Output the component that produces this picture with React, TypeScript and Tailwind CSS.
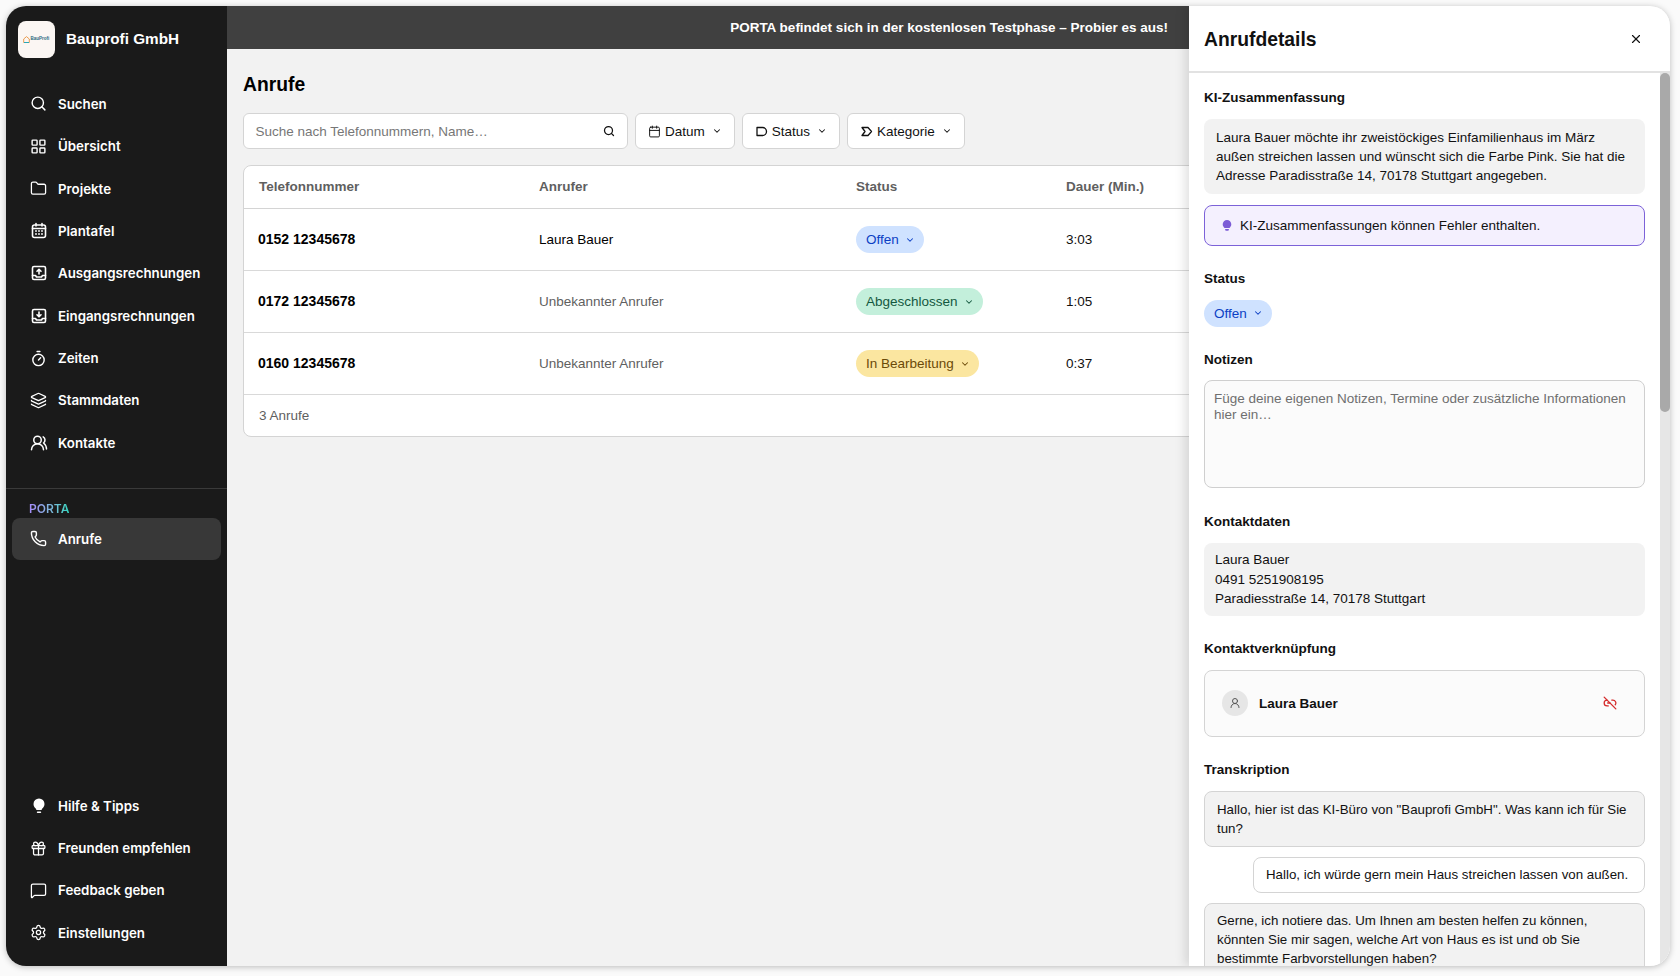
import {
  Calendar,
  ChevronDown,
  Folder,
  Gift,
  LayoutGrid,
  Layers,
  Link2Off,
  MessageSquare,
  Phone,
  Search,
  Settings,
  Timer,
  UserRound,
  UsersRound,
  X,
} from 'lucide-react';
import type { ReactNode } from 'react';

function InvoiceIcon({ down }: { down?: boolean }) {
  return (
    <svg width="18" height="18" viewBox="0 0 18 18" fill="none" stroke="currentColor" strokeWidth="1.6" strokeLinecap="round" strokeLinejoin="round">
      <rect x="2.5" y="2.5" width="13" height="13" rx="1.5" />
      <path d="M2.5 11.5h3l1 1.5h5l1-1.5h3" />
      {down ? <path d="M9 5v4.5M7 7.8l2 2 2-2" /> : <path d="M9 10V5.5M7 7.3l2-2 2 2" />}
    </svg>
  );
}

function PlanIcon() {
  return (
    <svg width="18" height="18" viewBox="0 0 18 18" fill="none" stroke="currentColor" strokeWidth="1.6" strokeLinecap="round">
      <rect x="2.5" y="3" width="13" height="12.5" rx="2" />
      <path d="M2.5 6.5h13M6 1.5v2.5M12 1.5v2.5" />
      <path d="M6 9h.01M9 9h.01M12 9h.01M6 12h.01M9 12h.01M12 12h.01" strokeWidth="1.8" />
    </svg>
  );
}

function BulbIcon() {
  return (
    <svg width="18" height="18" viewBox="0 0 18 18" fill="currentColor">
      <path d="M9 1.5a5.500 5.500 0 0 0-5.500 5.500c0 2.200 1.200 3.300 2.200 4.600.4.500.6 1 .7 1.400h5.200c.1-.4.300-.9.700-1.400 1-1.300 2.200-2.400 2.200-4.600A5.500 5.500 0 0 0 9 1.500z" />
      <rect x="6.800" y="14.500" width="4.400" height="1.500" rx=".7" />
    </svg>
  );
}

const mainNav: { label: string; icon: ReactNode }[] = [
  { label: 'Suchen', icon: <Search size={17} strokeWidth={2} /> },
  { label: 'Übersicht', icon: <LayoutGrid size={17} strokeWidth={2} /> },
  { label: 'Projekte', icon: <Folder size={17} strokeWidth={1.8} /> },
  { label: 'Plantafel', icon: <PlanIcon /> },
  { label: 'Ausgangsrechnungen', icon: <InvoiceIcon /> },
  { label: 'Eingangsrechnungen', icon: <InvoiceIcon down /> },
  { label: 'Zeiten', icon: <Timer size={17} strokeWidth={2} /> },
  { label: 'Stammdaten', icon: <Layers size={17} strokeWidth={1.8} /> },
  { label: 'Kontakte', icon: <UsersRound size={18} strokeWidth={2} /> },
];

const bottomNav: { label: string; icon: ReactNode }[] = [
  { label: 'Hilfe & Tipps', icon: <BulbIcon /> },
  { label: 'Freunden empfehlen', icon: <Gift size={17} strokeWidth={1.8} /> },
  { label: 'Feedback geben', icon: <MessageSquare size={17} strokeWidth={1.8} /> },
  { label: 'Einstellungen', icon: <Settings size={17} strokeWidth={1.8} /> },
];

function NavItem({ label, icon, active }: { label: string; icon: ReactNode; active?: boolean }) {
  return (
    <div className={`flex h-[42.4px] items-center rounded-lg pl-[18px] text-[13.3px] font-semibold text-white ${active ? 'bg-[#383838]' : ''}`}>
      <span className="flex w-[27px] shrink-0 items-center justify-start">{icon}</span>
      <span className="ml-[1px] pt-[2px]">{label}</span>
    </div>
  );
}

function Sidebar() {
  return (
    <aside className="flex w-[221px] shrink-0 flex-col bg-[#1a1a1a] font-['Inter',sans-serif]">
      <div className="flex h-[66px] items-center gap-[11.5px] pl-[11.5px] pt-[1px]">
        <div className="flex h-[37px] w-[37px] items-center justify-center gap-[1px] rounded-lg bg-[#fbf6f3]">
          <svg width="7" height="7" viewBox="0 0 7 7" fill="none">
            <path d="M.7 6.500V3L3.500.6 6.300 3v3.500z" stroke="#e8913c" strokeWidth=".9" />
            <path d="M1 6.500h5" stroke="#2aa7b5" strokeWidth="1" />
          </svg>
          <span className="font-['Liberation_Sans',sans-serif] text-[4.500px] font-bold leading-none text-[#2b6a80]">BauProfi</span>
        </div>
        <span className="font-['Liberation_Sans',sans-serif] text-[15.3px] font-bold text-white">Bauprofi GmbH</span>
      </div>
      <nav className="mt-[10.5px] flex flex-col px-[6px]">
        {mainNav.map((item) => (
          <NavItem key={item.label} label={item.label} icon={item.icon} />
        ))}
      </nav>
      <div className="mt-[23.5px] border-t border-[#3a3a3a] px-[6px] pt-[13px]">
        <div className="pl-[17px] text-[12px] font-semibold leading-[13px]">
          <span className="inline-block bg-gradient-to-r from-[#a78bfa] to-[#2dd4bf] bg-clip-text text-transparent">PORTA</span>
        </div>
        <div className="mt-[3px]">
          <NavItem label="Anrufe" icon={<Phone size={17} strokeWidth={2} />} active />
        </div>
      </div>
      <nav className="mt-auto flex flex-col px-[6px] pb-[12px]">
        {bottomNav.map((item) => (
          <NavItem key={item.label} label={item.label} icon={item.icon} />
        ))}
      </nav>
    </aside>
  );
}

function FilterButton({ label, icon }: { label: string; icon: ReactNode }) {
  return (
    <button className="flex h-[36px] items-center gap-[4px] rounded-md border border-[#d4d4d4] bg-white px-[12px] text-[13.5px] text-[#111]">
      {icon}
      <span className="pt-[2px]">{label}</span>
      <ChevronDown size={10} strokeWidth={2.5} className="ml-[3px]" />
    </button>
  );
}

const calls = [
  { phone: '0152 12345678', caller: 'Laura Bauer', known: true, status: 'Offen', pill: 'bg-[#cfe2ff] text-[#0b3fc4]', time: '3:03' },
  { phone: '0172 12345678', caller: 'Unbekannter Anrufer', known: false, status: 'Abgeschlossen', pill: 'bg-[#c3efdb] text-[#14583f]', time: '1:05' },
  { phone: '0160 12345678', caller: 'Unbekannter Anrufer', known: false, status: 'In Bearbeitung', pill: 'bg-[#fbe6a0] text-[#6b4a08]', time: '0:37' },
];

function StatusPill({ label, className }: { label: string; className: string }) {
  return (
    <span className={`inline-flex h-[27px] items-center gap-[6px] rounded-full pl-[10px] pr-[9px] text-[13.5px] ${className}`}>
      <span className="pt-[2px]">{label}</span>
      <ChevronDown size={10} strokeWidth={2.5} />
    </span>
  );
}

function CallsTable() {
  return (
    <div className="w-[1421px] rounded-lg border border-[#d4d4d4] bg-white text-[13.5px]">
      <div className="grid h-[43px] grid-cols-[295px_317px_210px_1fr] items-center border-b border-[#d4d4d4] pt-[1px] font-bold text-[#5f5f5f]">
        <div className="pl-[15px]">Telefonnummer</div>
        <div>Anrufer</div>
        <div>Status</div>
        <div>Dauer (Min.)</div>
      </div>
      {calls.map((call) => (
        <div key={call.phone} className="grid h-[62px] grid-cols-[295px_317px_210px_1fr] items-center border-b border-[#d9d9d9]">
          <div className="pl-[14px] text-[14px] font-bold text-black">{call.phone}</div>
          <div className={`pt-[2px] ${call.known ? 'text-black' : 'text-[#5f5f5f]'}`}>{call.caller}</div>
          <div>
            <StatusPill label={call.status} className={call.pill} />
          </div>
          <div className="pt-[2px] text-[#111]">{call.time}</div>
        </div>
      ))}
      <div className="flex h-[41px] items-center pl-[15px] pt-[2px] text-[#5f5f5f]">3 Anrufe</div>
    </div>
  );
}

function SectionTitle({ children }: { children: ReactNode }) {
  return <h3 className="text-[13.5px] font-bold leading-[20px] text-[#111]">{children}</h3>;
}

function DetailsPanel() {
  return (
    <aside className="flex w-[481px] shrink-0 flex-col bg-white shadow-[-4px_0_10px_rgba(0,0,0,0.12)]">
      <header className="flex h-[67px] shrink-0 items-center justify-between border-b-2 border-[#e2e2e2] pl-[15px] pr-[27px]">
        <h2 className="pt-[3px] text-[19.3px] font-bold text-[#111]">Anrufdetails</h2>
        <X size={14} strokeWidth={2} className="text-[#111]" />
      </header>
      <div className="flex min-h-0 flex-1">
        <div className="min-w-0 flex-1 overflow-hidden pl-[15px] pr-[15px] pt-[15px] text-[13.5px] text-[#111]">
          <SectionTitle>KI-Zusammenfassung</SectionTitle>
          <div className="mt-[11px] rounded-lg bg-[#f2f2f2] px-[12px] py-[8.5px] leading-[19.3px]">
            Laura Bauer möchte ihr zweistöckiges Einfamilienhaus im März außen streichen lassen und wünscht sich die Farbe Pink. Sie hat die Adresse Paradisstraße 14, 70178 Stuttgart angegeben.
          </div>
          <div className="mt-[11px] flex h-[41px] items-center gap-[7px] rounded-lg border border-[#7c62d8] bg-[#f4f0fe] pl-[16px]">
            <svg width="12" height="14" viewBox="0 0 12 14" fill="#7c5cd6" className="mt-[2px]">
              <path d="M6 1a4.300 4.300 0 0 0-4.300 4.300c0 1.700.9 2.600 1.800 3.700h5c.9-1.100 1.800-2 1.800-3.700A4.300 4.300 0 0 0 6 1zM4 10h4l-.6 1.800H4.600z" />
            </svg>
            <span className="pt-[2px]">KI-Zusammenfassungen können Fehler enthalten.</span>
          </div>
          <div className="mt-[23px]">
            <SectionTitle>Status</SectionTitle>
          </div>
          <div className="mt-[11px]">
            <StatusPill label="Offen" className="bg-[#cfe2ff] text-[#0b3fc4]" />
          </div>
          <div className="mt-[23px]">
            <SectionTitle>Notizen</SectionTitle>
          </div>
          <textarea
            readOnly
            className="mt-[10px] block h-[108px] w-full resize-none rounded-lg border border-[#cfcfcf] bg-[#fbfbfb] px-[9px] py-[10px] text-[13.5px] leading-[16px] placeholder:text-[#6f6f6f]"
            placeholder="Füge deine eigenen Notizen, Termine oder zusätzliche Informationen hier ein…"
          />
          <div className="mt-[24px]">
            <SectionTitle>Kontaktdaten</SectionTitle>
          </div>
          <div className="mt-[11px] rounded-lg bg-[#f2f2f2] px-[11px] py-[7.5px] leading-[19.3px]">
            <div>Laura Bauer</div>
            <div>0491 5251908195</div>
            <div>Paradiesstraße 14, 70178 Stuttgart</div>
          </div>
          <div className="mt-[23px]">
            <SectionTitle>Kontaktverknüpfung</SectionTitle>
          </div>
          <div className="mt-[11px] flex h-[67px] items-center justify-between rounded-lg border border-[#d4d4d4] bg-[#fbfbfb] pl-[17px] pr-[27px]">
            <div className="flex items-center gap-[11px]">
              <span className="flex h-[26px] w-[26px] items-center justify-center rounded-full bg-[#e6e6e6] text-[#555]">
                <UserRound size={12} strokeWidth={2} />
              </span>
              <span className="pt-[1px] font-bold">Laura Bauer</span>
            </div>
            <Link2Off size={14} strokeWidth={2.2} className="text-[#d42a2a]" />
          </div>
          <div className="mt-[23px]">
            <SectionTitle>Transkription</SectionTitle>
          </div>
          <div className="mt-[11px] rounded-lg border border-[#d4d4d4] bg-[#f2f2f2] py-[8px] pl-[12px] pr-[8px] text-[13.3px] leading-[19.3px]">
            Hallo, hier ist das KI-Büro von "Bauprofi GmbH". Was kann ich für Sie tun?
          </div>
          <div className="ml-[49px] mt-[10px] rounded-lg border border-[#d4d4d4] bg-white py-[7px] pl-[12px] pr-[8px] text-[13.3px] leading-[19.3px]">
            Hallo, ich würde gern mein Haus streichen lassen von außen.
          </div>
          <div className="mt-[10px] rounded-lg border border-[#d4d4d4] bg-[#f2f2f2] py-[7px] pl-[12px] pr-[8px] text-[13.3px] leading-[19.3px]">
            Gerne, ich notiere das. Um Ihnen am besten helfen zu können, könnten Sie mir sagen, welche Art von Haus es ist und ob Sie bestimmte Farbvorstellungen haben?
          </div>
        </div>
        <div className="w-[10px] shrink-0 bg-[#e6e6e6]">
          <div className="h-[339px] rounded-full bg-[#a9a9a9]" />
        </div>
      </div>
    </aside>
  );
}

export default function App() {
  return (
    <div className="h-[976px] w-[1680px] bg-[#fafafa] p-[6px] font-['Liberation_Sans',sans-serif]">
      <div className="flex h-[960px] w-[1664px] overflow-hidden rounded-[20px] bg-[#f2f2f2] shadow-[0_1px_6px_rgba(0,0,0,0.25)]">
        <Sidebar />
        <main className="flex min-w-0 flex-1 flex-col overflow-hidden">
          <div className="flex h-[43px] shrink-0 items-center justify-end bg-[#404040] pr-[21px] pt-[2px] text-[13.5px] font-bold text-white">
            PORTA befindet sich in der kostenlosen Testphase – Probier es aus!
          </div>
          <div className="pl-[16px] pt-[22px]">
            <h1 className="text-[19.3px] font-bold leading-[28px] text-black">Anrufe</h1>
            <div className="mt-[14px] flex gap-[7px]">
              <div className="flex h-[36px] w-[385px] items-center justify-between rounded-md border border-[#d4d4d4] bg-white pl-[11.5px] pr-[12px] text-[13.5px] text-[#777]">
                <span className="pt-[2px]">Suche nach Telefonnummern, Name…</span>
                <Search size={12} strokeWidth={2.5} className="text-[#111]" />
              </div>
              <FilterButton label="Datum" icon={<Calendar size={13} strokeWidth={1.8} />} />
              <FilterButton
                label="Status"
                icon={
                  <svg width="13" height="13" viewBox="0 0 13 13" fill="none" stroke="currentColor" strokeWidth="1.300" strokeLinejoin="round">
                    <path d="M2 2.500h5.500a4 4 0 0 1 0 8H2z" />
                  </svg>
                }
              />
              <FilterButton
                label="Kategorie"
                icon={
                  <svg width="13" height="13" viewBox="0 0 13 13" fill="none" stroke="currentColor" strokeWidth="1.300" strokeLinejoin="round">
                    <path d="M2 2.500h6L11.500 6.500 8 10.500H2L5 6.500z" />
                  </svg>
                }
              />
            </div>
            <div className="mt-[16px]">
              <CallsTable />
            </div>
          </div>
        </main>
        <DetailsPanel />
      </div>
    </div>
  );
}
